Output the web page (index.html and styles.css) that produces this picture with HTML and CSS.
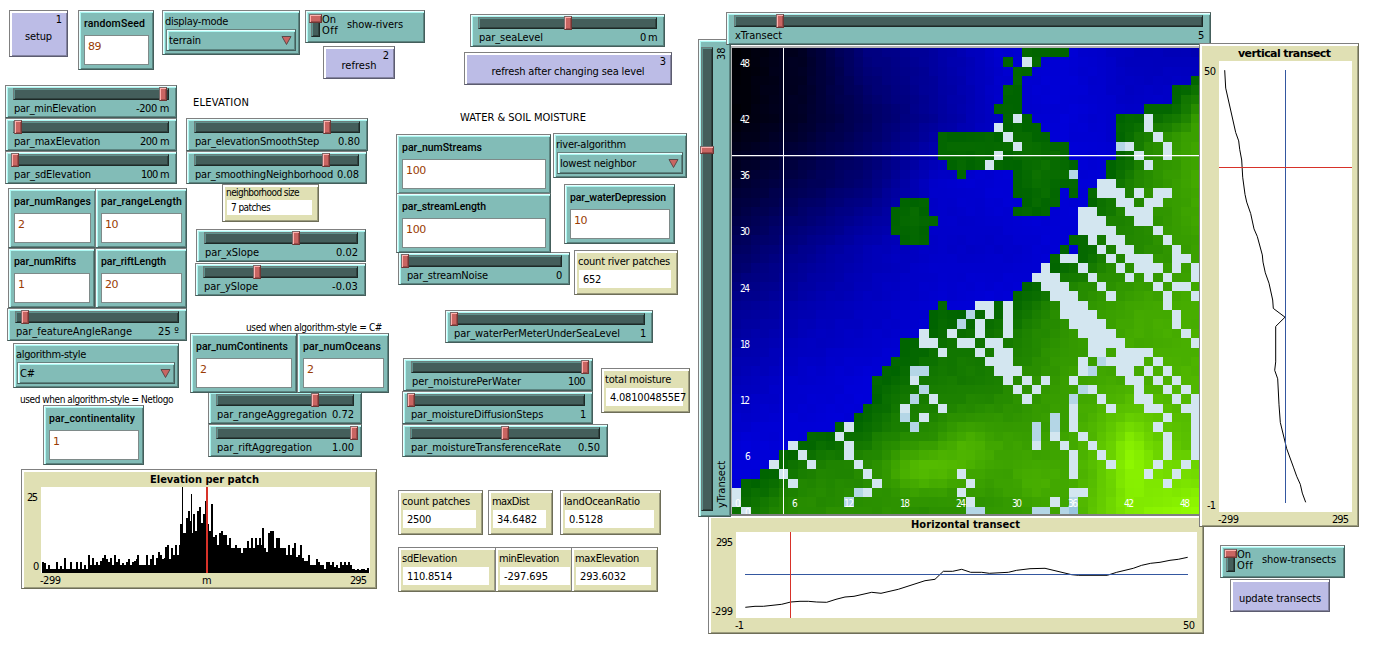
FILE: index.html
```html
<!DOCTYPE html>
<html lang="en">
<head>
<meta charset="utf-8">
<title>Landscape generator</title>
<link rel="stylesheet" href="styles.css">
</head>
<body>
<main class="model" id="model"></main>
<script src="app.js"></script>
</body>
</html>
```
FILE: styles.css
```css
body {
  margin: 0;
  background: #fff;
  color: #000;
  font: 11px/13px "DejaVu Sans Condensed", "DejaVu Sans", sans-serif;
}
.model {
  position: relative;
  width: 1376px;
  height: 651px;
  overflow: hidden;
}
.model span { white-space: nowrap; }

/* Widgets sit freely on the interface canvas */
.widget {
  position: absolute;
  box-sizing: border-box;
  border: 1px solid;
}
.slider, .input, .chooser, .switch, .vslider {
  background: #82bcb7;
  border-color: #808080 #445e5b #445e5b #808080;
  box-shadow: inset 1px 1px #e9ffff, inset 2px 2px #abf7f1, inset -1px -1px #5b8480;
}
.button {
  background: #bcbce6;
  border-color: #808080 #5c5c70 #5c5c70 #808080;
  box-shadow: inset 2px 2px #fff, inset -1px -1px #8484a1;
  display: flex;
  align-items: center;
  justify-content: center;
  padding-top: 5px;
}
.button .key { position: absolute; top: 2px; right: 5px; }
.monitor, .plot {
  background: #e0e0b4;
  border-color: #808080 #6e6e58 #6e6e58 #808080;
  box-shadow: inset 2px 2px #fff, inset -1px -1px #9d9d7e;
}

.slider { display: flex; flex-direction: column; padding: 2px 7px 0; }
.track {
  position: relative;
  box-sizing: border-box;
  height: 12px;
  flex: none;
  background: #445e5b;
  border: 1px solid;
  border-color: #6c7d7b #1d2927 #1d2927 #6c7d7b;
  box-shadow: inset 1px 1px #5f928d, inset -1px -1px #30423f;
}
.thumb {
  position: absolute;
  top: -2px;
  box-sizing: border-box;
  width: 8px;
  height: 14px;
  background: #c96562;
  border: 1px solid;
  border-color: #7b6b6b #6e3735 #6e3735 #7b6b6b;
  box-shadow: inset 1px 1px #ffb2af, inset -1px -1px #9c4d4b;
}
.caption { display: flex; justify-content: space-between; margin: 2px 0 0 1px; }

.vslider { display: flex; padding: 7px 2px 6px; gap: 2px; }
.vslider .track { width: 12px; height: 464px; }
.vslider .thumb { left: -2px; width: 14px; height: 8px; }
.vcaption {
  display: flex;
  justify-content: space-between;
  writing-mode: vertical-rl;
  transform: rotate(180deg);
  height: 461px;
  width: 13px;
}

.input { padding: 6px 4px 4px 5px; display: flex; flex-direction: column; justify-content: space-between; }
.input .name { font: 500 10.5px/13px Roboto, sans-serif; }
.field {
  box-sizing: border-box;
  height: 30px;
  background: #fff;
  border: 1px solid #7e8a89;
  padding: 4px 3px 0;
  color: #9a3c04;
  font-family: "DejaVu Sans", sans-serif;
}

.chooser { padding: 4px 3px 3px 2px; display: flex; flex-direction: column; justify-content: space-between; }
.select {
  box-sizing: border-box;
  height: 22px;
  display: flex;
  justify-content: space-between;
  align-items: center;
  margin-left: 1px;
  padding: 0 3px 0 2px;
  border: 1px solid;
  border-color: #68807d #445e5b #445e5b #68807d;
  box-shadow: inset 1px 1px #e9ffff, inset 2px 2px #abf7f1, inset -1px -1px #5b8480;
}
.select svg { display: block; margin-top: 1px; }

.switch { display: flex; padding: 4px 0 0 3px; }
.toggle { width: 13px; height: 22px; position: relative; }
.toggle .track { width: 9px; height: 20px; margin: 2px 0 0 2px; }
.toggle .thumb { top: -1px; left: 0; width: 13px; height: 9px; }
.onoff { display: flex; flex-direction: column; line-height: 11px; width: 25px; margin-top: -1px; }
.switch .name { margin-top: 3px; }

.monitor { padding: 4px 6px 6px 3px; display: flex; flex-direction: column; gap: 2px; }
.readout { background: #fff; height: 20px; margin-left: 1px; padding: 3px 4px 0; box-sizing: border-box; }
.monitor.small { font-size: 10px; line-height: 10px; padding-top: 3px; }
.monitor.small .readout { height: 16px; padding-top: 3px; }

.note { position: absolute; }
.note.small { font-size: 10px; }

.plot svg, .world svg { display: block; }
.plot svg { margin: -1px; }
.plot text { font: 11px "DejaVu Sans Condensed", sans-serif; }
.plot .title { font-weight: bold; }
.plot .wide { font-family: "DejaVu Sans", sans-serif; }

.world {
  position: absolute;
  left: 730px;
  top: 44px;
  width: 470px;
  height: 471px;
  border-top: 2px solid #fff;
  border-bottom: 1px solid #808080;
  background: #b4b4b4;
  box-sizing: border-box;
  padding: 2px 1px 0 2px;
  overflow: hidden;
}
.world text { font: 10px "DejaVu Sans Condensed", sans-serif; fill: #fff; }
```
FILE: app.js
```js
const model = document.getElementById("model");

// Text run; w is the width it should occupy, in pixels.
const t = (text, w, cls = "") =>
  `<span class="${cls}"${w ? ` data-w="${w}"` : ""}>${text.replace(/&/g, "&amp;")}</span>`;

function add(cls, x, y, w, h, html) {
  const el = document.createElement("div");
  el.className = cls;
  el.style.cssText = `left:${x}px;top:${y}px;width:${w}px;height:${h}px`;
  el.innerHTML = html;
  model.appendChild(el);
}

// x, y, width, label, label width, value, value width, thumb x
const slider = (x, y, w, name, nw, val, vw, tx) =>
  add("widget slider", x, y, w, 33,
    `<div class="track"><i class="thumb" style="left:${tx - x - 9}px"></i></div>
     <div class="caption">${t(name, nw)}${t(val, vw)}</div>`);

const input = (x, y, w, name, nw, val, vw) =>
  add("widget input", x, y, w, 60, `${t(name, nw, "name")}<div class="field">${t(val, vw)}</div>`);

const chooser = (x, y, w, name, nw, val, vw) =>
  add("widget chooser", x, y, w, 45,
    `${t(name, nw)}<div class="select">${t(val, vw)}
     <svg width="11" height="11"><path d="M1 1.5H10L5.5 9.5Z" fill="#c96562" stroke="#5a4a4a"/></svg></div>`);

const monitor = (x, y, w, name, nw, val, vw, small) =>
  add("widget monitor" + (small ? " small" : ""), x, y, w, small ? 38 : 45,
    `${t(name, nw)}<div class="readout">${t(val, vw)}</div>`);

const button = (x, y, w, h, name, nw, key) =>
  add("widget button", x, y, w, h, t(name, nw) + (key ? t(key, 0, "key") : ""));

const toggle = (x, y, w, name, nw) =>
  add("widget switch", x, y, w, 33,
    `<div class="toggle"><div class="track"></div><i class="thumb"></i></div>
     <div class="onoff">${t("On", 14)}${t("Off", 16)}</div>${t(name, nw, "name")}`);

function note(x, y, text, w, small) {
  const el = document.createElement("div");
  el.className = "note" + (small ? " small" : "");
  el.style.cssText = `left:${x}px;top:${y}px`;
  el.innerHTML = t(text, w);
  model.appendChild(el);
}

button(9, 10, 59, 47, "setup", 27, "1");
input(78, 10, 76, "randomSeed", 61, "89", 13);
chooser(162, 10, 138, "display-mode", 63, "terrain", 32);
toggle(305, 10, 120, "show-rivers", 56);
button(323, 46, 72, 33, "refresh", 35, "2");
slider(470, 14, 195, "par_seaLevel", 64, "0 m", 17, 564);
button(464, 52, 208, 33, "refresh after changing sea level", 153, "3");

slider(5, 85, 172, "par_minElevation", 82, "-200 m", 33, 159);
slider(5, 118, 172, "par_maxElevation", 86, "200 m", 29, 14);
slider(5, 151, 172, "par_sdElevation", 77, "100 m", 28, 11);
slider(186, 118, 182, "par_elevationSmoothStep", 124, "0.80", 22, 323);
slider(186, 151, 181, "par_smoothingNeighborhood", 138, "0.08", 22, 322);
note(193, 96, "ELEVATION", 56);
monitor(222, 184, 97, "neighborhood size", 73, "7 patches", 39, true);

slider(208, 391, 154, "par_rangeAggregation", 110, "0.72", 22, 311);
slider(208, 424, 154, "par_riftAggregation", 95, "1.00", 22, 350);
slider(7, 308, 180, "par_featureAngleRange", 116, "25 º", 21, 21);
input(8, 188, 88, "par_numRanges", 77, "2", 7);
input(95, 188, 92, "par_rangeLength", 81, "10", 13);
input(8, 248, 87, "par_numRifts", 62, "1", 7);
input(95, 248, 92, "par_riftLength", 65, "20", 13);
slider(196, 229, 170, "par_xSlope", 54, "0.02", 22, 292);
slider(195, 263, 171, "par_ySlope", 54, "-0.03", 26, 253);
note(246, 321, "used when algorithm-style = C#", 136, true);
input(190, 333, 107, "par_numContinents", 92, "2", 7);
input(297, 333, 92, "par_numOceans", 78, "2", 7);
chooser(13, 343, 166, "algorithm-style", 70, "C#", 15);
note(20, 393, "used when algorithm-style = Netlogo", 153, true);
input(43, 405, 101, "par_continentality", 86, "1", 7);

note(460, 111, "WATER & SOIL MOISTURE", 126);
slider(398, 252, 172, "par_streamNoise", 81, "0", 6, 401);
input(396, 134, 155, "par_numStreams", 80, "100", 20);
input(396, 193, 155, "par_streamLength", 84, "100", 20);
chooser(553, 133, 134, "river-algorithm", 70, "lowest neighbor", 76);
input(564, 184, 111, "par_waterDepression", 96, "10", 13);
monitor(574, 250, 104, "count river patches", 92, "652", 18);
slider(445, 310, 208, "par_waterPerMeterUnderSeaLevel", 166, "1", 5, 450);
slider(403, 358, 190, "per_moisturePerWater", 109, "100", 17, 581);
slider(402, 391, 191, "par_moistureDiffusionSteps", 132, "1", 5, 407);
slider(402, 424, 206, "par_moistureTransferenceRate", 150, "0.50", 22, 501);
monitor(601, 368, 89, "total moisture", 66, "4.081004855E7", 76);
monitor(398, 490, 85, "count patches", 68, "2500", 24);
monitor(488, 490, 65, "maxDist", 37, "34.6482", 40);
monitor(560, 490, 101, "landOceanRatio", 76, "0.5128", 34);
monitor(398, 547, 98, "sdElevation", 55, "110.8514", 45);
monitor(495, 547, 82, "minElevation", 60, "-297.695", 44);
monitor(571, 547, 87, "maxElevation", 64, "293.6032", 46);

toggle(1220, 545, 125, "show-transects", 74);
button(1230, 579, 100, 33, "update transects", 82);

// Plots. Every svg shares the page's coordinates through its viewBox.
const txt = (x, y, s, w, cls = "") =>
  `<text x="${x}" y="${y}" textLength="${w}" class="${cls}">${s}</text>`;
const plot = (x, y, w, h, inner) =>
  add("widget plot", x, y, w, h,
    `<svg width="${w}" height="${h}" viewBox="${x} ${y} ${w} ${h}">${inner}</svg>`);

const runs = [
  [42, [11,10,4,8,4,4,4,11,4,7,4,15,4,4,11,4,4,11,4,11,4,8,4]],
  [88, [18,8,15,8,11,8,12,15,18,14,11,15,8,18]],
  [116, [11,14,8,10,8,11,14,8,11,12,14]],
  [137, [18,8,4,5,8]],
  [146, [18,8,14,18,8,15,21,18,14,15]],
  [165, [26,28,14,25,18,28,18,28]],
  [180, [49]], [182, [86]], [184, [38,55,62,52]],
  [191, [79,59,42,62,66,50,59]],
  [205, [72,49,42]], [211, [69]],
  [213, [36,38,28,40,42,38,38,28,25]],
  [229, [35,25,25,28,25,25,20,25,25,32,25,35,25,35,28,35,28]],
  [262, [45]], [264, [25,21,40,42,42,25,35,35,25,25,25,18]],
  [288, [28,18,25,30,16,18,28,15,12,12,18,8,8,8,14,11,8,8,4,11,11,8,11,6,8,5,11,8,11,8,11,8]],
  [353, [4,3,4,3,4,4,3,5]],
];
let bars = "";
for (const [x0, hs] of runs)
  hs.forEach((h, i) => {
    const w = h === 86 || h === 79 ? 1 : 2;
    bars += `M${x0 + 2 * i} 573v${-h}h${w}v${h}z`;
  });
plot(21, 469, 356, 120,
  `<rect x="41" y="487" width="329" height="86" fill="#fff"/>
   <path d="${bars}" shape-rendering="crispEdges"/>
   <path d="M42 573v-4H353v4zM180 573v-28H230v28zM110 573v-8H180v8z" shape-rendering="crispEdges"/>
   <rect x="182" y="533" width="28" height="40"/>
   <rect x="206" y="487" width="2" height="86" fill="#d73229"/>` +
  txt(150, 483, "Elevation per patch", 109, "title") +
  txt(27, 501, "25", 11) + txt(33, 570, "0", 5) +
  txt(40, 584, "-299", 21) + txt(202, 584, "m", 8) + txt(350, 584, "295", 17));

const line = (pts, fx, fy) => pts.map(([x, y]) => fx(x).toFixed(1) + "," + fy(y).toFixed(1)).join(" ");

const horiz = [[136,307],[165,304],[190,304],[245,298],[272,291],[300,289],[325,289],[350,291],[380,292],
  [408,283],[435,276],[462,274],[515,262],[543,265],[595,253],[675,227],[705,223],[730,199],[758,199],
  [785,193],[812,202],[845,202],[868,205],[925,202],[950,196],[990,191],[1035,190],[1115,209],[1135,211],
  [1222,211],[1250,202],[1300,190],[1325,181],[1352,175],[1380,172],[1410,166],[1435,163],[1463,157]];
plot(708, 515, 496, 119,
  `<rect x="736" y="532" width="461" height="86" fill="#fff"/>
   <polyline points="${line(horiz, x => 700 + x / 3, y => 505 + y / 3)}" fill="none" stroke="#000"/>
   <rect x="745" y="574" width="443" height="1" fill="#3457a0"/>
   <rect x="790" y="532" width="1" height="86" fill="#d73229"/>` +
  txt(911, 528, "Horizontal transect", 109, "title") +
  txt(716, 546, "295", 17) + txt(712, 615, "-299", 21) +
  txt(735, 629, "-1", 9) + txt(1183, 629, "50", 12));

// Patch types by row: g land, R river, B / D wetter river; everything else is sea.
const rows = [
  "g31-35", "g29 R31 g32", "g30-31", "g30 g49", "g29-30 g47-49", "g29-30 g47-49", "g28-30 g44-49",
  "g29-31 R30 g41-49 R44", "R28 g29-32 g41-49 R44", "g22-33 R29 g41-49 R45",
  "g22-35 R30 g41-49 B41 R42 R46", "g22-35 R28 g41-49 R43 R46", "g23-36 R27 g40-49 R44",
  "g24 g30-35 B36 g40-49", "g30-36 R39-40 g41-49", "g30-34 g36 g38-49 R39-41 R43 R45-46",
  "g18-20 g31-34 g38-49 R41-42 R44-45", "g17-20 g30-33 R37-38 g39-49 R42-44",
  "g17-21 R37-39 g40-49 R43-44", "g17-20 R37-40 g41-49 R45", "g18-20 g36-49 R38 R40-41 R46",
  "g35 g37-49 R39 R41-42 R47", "g34-49 R35-36 R40 R42-44 R47-48", "R33 g34-49 R37 R41 R43-45 R47 R49",
  "R32-34 g35-49 R38 R42 R44 R46 R49", "g31-49 R33-35 R39 R45 R47-48", "g30-49 R34-36 R40 R46 R49",
  "g22 R26-27 g28-49 R29 R35-37 R46", "g21-49 B25 R27 R29 R35-38 R47", "g21-49 B24 R26 R29 R36-39 R47",
  "R20 g21-49 R23 R26 R29 R37-40 R48", "g18-49 R20-21 R24-25 R27-28 R38-41 R49",
  "g18-49 R22 R26 R28-29 R38-39 R41-44", "g17-49 R27-29 R37 B39 R40-43 R45",
  "g16-49 B19-20 R28-30 R37 B38 R41-42 R44 R46", "g15-49 R19 R29 R31 R33 R36 R42-43 R45 R47",
  "g15-49 B20 R30 R32 B37 R38 R43 R46 R48", "g15-49 B19 R21 R31 B36 R39 R43-44 R47 R49",
  "g14-49 R18 R22 R36 R40 R44-45 R48-49", "g13-49 B18 R20 B34 R36 R46 R49",
  "g11-49 R12 B19 B32 B34 R36 R45 R49", "g8-49 R11 B32 R34 R37 R46 R49",
  "R6 g7-49 R12 R32 R35 R38 R46 R49", "g5-49 R7 R12 R36 R39 R46 R49", "R4 g5-49 R8 R13 R36 R40 R45 R48",
  "g3-49 R5 R14 R24 R36 R44 R47", "g1-49 R6 R15 R25 R46", "R0 g1-49 B13 R14 R24 R36-37",
  "R0 g1-49 B12 R25 R34 B36", "g0-49 R1 B25-26 B32-33 B35 D36",
];
const cells = rows.map(spec => {
  const row = Array(50).fill(".");
  for (const part of spec.split(" ")) {
    const [a, b = a] = part.slice(1).split("-").map(Number);
    for (let c = a; c <= b; c++) row[c] = part[0];
  }
  return row;
});

// Shades sampled every seven patches
const sea = [
  [5,35,125,160,205,215,190,180], [8,40,95,150,200,215,200,215], [45,80,120,200,215,215,215,215],
  [95,140,180,200,200,215,215,215], [150,178,195,210,220,220,220,220], [185,205,215,220,220,220,220,220],
  [215,218,220,220,220,220,220,220], [220,220,220,220,220,220,220,220],
];
const land = [
  [0,0,0,.05,.05,.08,.1,.25], [0,0,.1,.05,.05,.1,.12,.38], [0,0,.1,.12,.07,.15,.22,.45],
  [0,0,.1,.1,.05,.1,.22,.38], [0,0,.05,.05,.1,.28,.43,.48], [0,0,.1,.13,.18,.38,.46,.52],
  [.1,.15,.17,.24,.4,.4,.76,.6], [.1,.26,.3,.26,.33,.42,.85,1],
];
function sample(g, r, c) {
  const i = Math.min(6, Math.floor(r / 7)), j = Math.min(6, Math.floor(c / 7));
  const u = r / 7 - i, v = c / 7 - j;
  return (g[i][j] * (1 - v) + g[i][j + 1] * v) * (1 - u) + (g[i + 1][j] * (1 - v) + g[i + 1][j + 1] * v) * u;
}
const bump = (r, c, r0, c0, sy, sx, a) =>
  a * Math.exp(-(((r - r0) / sy) ** 2) - ((c - c0) / sx) ** 2);
function toSea(r, c) {
  let best = 9;
  for (let y = Math.max(0, r - 4); y <= Math.min(49, r + 4); y++)
    for (let x = Math.max(0, c - 4); x <= Math.min(49, c + 4); x++)
      if (cells[y][x] === ".") best = Math.min(best, Math.hypot(y - r, x - c));
  return best;
}
function shade(r, c) {
  const k = cells[r][c];
  if (k === "R") return "#d3e6f0";
  if (k === "B") return "#b4d6e6";
  if (k === "D") return "#99c6df";
  const n = ((r * 37 + c * 91 + r * c * 13) % 17) / 17 - .5;
  if (k === ".") return `rgb(0,0,${Math.round(sample(sea, r, c) + n * 6)})`;
  let v = sample(land, r, c) + bump(r, c, 44.5, 20, 2.6, 4, .32) + bump(r, c, 42, 24.5, 3, 2.5, .16)
    + bump(r, c, 43, 42, 4, 2, .16) + bump(r, c, 46, 32, 2, 2.5, .1);
  v = Math.max(0, Math.min(1, v * Math.min(1, .3 * toSea(r, c) - .2) + n * .04));
  return `rgb(${Math.round(150 * v)},${Math.round(100 + 155 * v)},0)`;
}
let patches = "";
const edge = (o, i) => Math.round(o + 9.36 * i);
for (let r = 0; r < 50; r++)
  for (let c = 0; c < 50; c++) {
    const x = edge(732, c), y = edge(48, r);
    patches += `<rect x="${x}" y="${y}" width="${edge(732, c + 1) - x}" height="${edge(48, r + 1) - y}" fill="${shade(r, c)}"/>`;
  }
let marks = "";
for (let v = 6; v <= 48; v += 6) {
  const y = 67 + (48 - v) * 9.36;
  marks += txt(v < 10 ? 745 : 740, Math.round(y), v, v < 10 ? 5 : 10);
  marks += txt(Math.round(736 + v * 9.34) - (v < 10 ? 0 : 4), 507, v, v < 10 ? 5 : 10);
}
marks += txt(735, 507, "0", 5) + txt(745, 516, "0", 5);
const world = document.createElement("div");
world.className = "world";
world.innerHTML = `<svg width="467" height="466" viewBox="732 48 467 466">
  <g shape-rendering="crispEdges">${patches}
  <rect x="783" y="48" width="1" height="466" fill="#fff"/>
  <rect x="732" y="155" width="468" height="1" fill="#fff"/>
  <rect x="732" y="156" width="468" height="1" fill="#fff" opacity=".25"/></g>${marks}</svg>`;
model.appendChild(world);

add("widget vslider", 698, 39, 33, 478,
  `<div class="track"><i class="thumb" style="top:98px"></i></div>
   <div class="vcaption">${t("yTransect", 0)}${t("38", 0)}</div>`);
slider(726, 12, 485, "xTransect", 47, "5", 5, 776);

const vert = [[104,105],[107,152],[137,268],[146,290],[149,312],[155,340],[158,385],[165,430],[170,450],
  [182,480],[192,520],[202,540],[217,588],[219,607],[226,635],[237,662],[248,706],[250,728],[285,751],
  [257,775],[257,868],[254,890],[263,912],[267,980],[271,1026],[290,1095],[311,1145],[320,1167],
  [331,1188],[337,1211],[347,1235]];
plot(1199, 43, 160, 484,
  `<rect x="1219" y="61" width="133" height="451" fill="#fff"/>
   <polyline points="${line(vert, x => 1190 + x / 3, y => 30 + y / 2.615)}" fill="none" stroke="#000"/>
   <rect x="1285" y="70" width="1" height="433" fill="#3457a0"/>
   <rect x="1219" y="167" width="133" height="1" fill="#d73229"/>` +
  txt(1238, 57, "vertical transect", 93, "title wide") +
  txt(1204, 75, "50", 12) + txt(1207, 509, "-1", 9) +
  txt(1218, 523, "-299", 21) + txt(1332, 523, "295", 17));

// Track each label so that it fills its stated width.
for (const el of document.querySelectorAll("[data-w]")) {
  el.style.alignSelf = getComputedStyle(el.parentNode).flexDirection === "column" ? "flex-start" : "";
  const natural = el.getBoundingClientRect().width;
  el.style.letterSpacing = ((el.dataset.w - natural) / el.textContent.length).toFixed(3) + "px";
}
```
